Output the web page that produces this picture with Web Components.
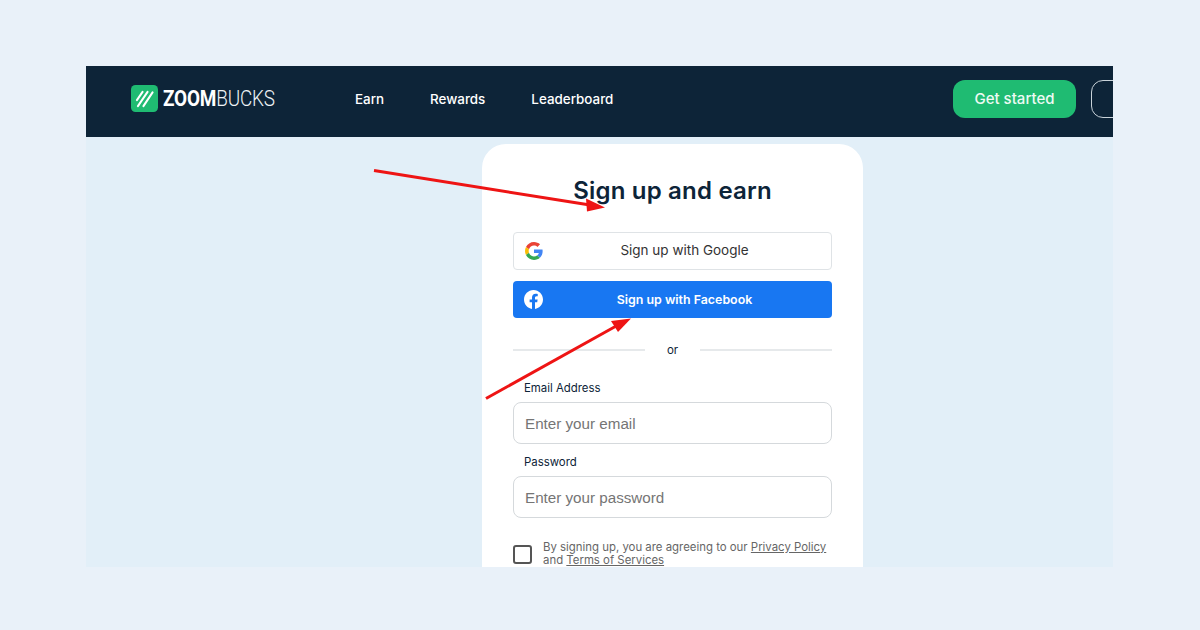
<!DOCTYPE html>
<html lang="en">
<head>
<meta charset="utf-8">
<title>Zoombucks sign up</title>
<style>
html, body { margin: 0; height: 100%; }
body { background: #e9f1f9; font-family: Inter, sans-serif; }
</style>
</head>
<body>
<zb-page>
  <zb-nav slot="nav"></zb-nav>
  <zb-signup slot="main"></zb-signup>
</zb-page>
<script>
'use strict';

class ZbPage extends HTMLElement {
  constructor() {
    super();
    const shadowRoot = this.attachShadow({mode: 'open'});
    shadowRoot.innerHTML = `
<style>
:host {
  display: block;
  box-sizing: border-box;
  width: 1200px;
  height: 630px;
  padding: 66px 87px 63px 86px;
}
.frame {
  position: relative;
  height: 100%;
  display: flex;
  flex-direction: column;
  overflow: hidden;
  background: #e2eff8;
}
.main {
  flex: 1;
  min-height: 0;
  display: flex;
  padding: 7px 0 0 396px;
}
/* the red arrows are drawn over the shot */
.arrows {
  position: absolute;
  left: 0;
  top: 0;
  width: 1027px;
  height: 501px;
  pointer-events: none;
}
</style>
<div class="frame">
  <slot name="nav"></slot>
  <div class="main"><slot name="main"></slot></div>
  <svg class="arrows" viewBox="86 66 1027 501">
    <path d="M374 170.500 L590 205" stroke="#ee1414" stroke-width="3" fill="none"/>
    <path d="M605 207.500 L586 198.500 L587 211.500 Z" fill="#ee1414"/>
    <path d="M486 398.500 L618 325" stroke="#ee1414" stroke-width="3" fill="none"/>
    <path d="M631 318.500 L611 321 L618 332 Z" fill="#ee1414"/>
  </svg>
</div>
`;
  }
}

class ZbNav extends HTMLElement {
  constructor() {
    super();
    const shadowRoot = this.attachShadow({mode: 'open'});
    shadowRoot.innerHTML = `
<style>
:host {
  box-sizing: border-box;
  display: flex;
  flex: none;
  align-items: center;
  height: 71px;
  padding: 0 0 6px 45px;
  background: #0d2438;
  color: #fff;
}
.logo {
  display: flex;
  align-items: center;
  gap: 5px;
  width: 224px;
  flex: none;
}
.logo svg { display: block; }
.word {
  font-family: Roboto, sans-serif;
  font-size: 22px;
  line-height: 26px;
  font-weight: 300;
  letter-spacing: -.2px;
  color: #eef3f6;
  transform: scaleX(.86);
  transform-origin: left center;
  white-space: nowrap;
}
.word b { font-weight: 700; color: #fff; }
.links {
  display: flex;
  gap: 46px;
  font-size: 13.4px;
  font-weight: 500;
  flex: 1;
}
.btn {
  box-sizing: border-box;
  flex: none;
  height: 38px;
  border-radius: 12px;
}
.start {
  display: flex;
  align-items: center;
  justify-content: center;
  width: 123px;
  background: #1fbb72;
  font-size: 15px;
  font-weight: 500;
  color: #eefaf4;
}
.login {
  width: 60px;
  margin: 0 -38px 0 15px;
  border: 1px solid #c9d3da;
}
</style>
<div class="logo">
  <svg width="27" height="27" viewBox="0 0 27 27">
    <rect width="27" height="27" rx="4.500" fill="#1fbb72"/>
    <path d="M6 15 L11.500 7 M7 21 L16.500 7 M12.500 21 L21.500 7.500" stroke="#fff" stroke-width="2.200" stroke-linecap="round" fill="none"/>
  </svg>
  <span class="word"><b>ZOOM</b>BUCKS</span>
</div>
<nav class="links"><span>Earn</span><span>Rewards</span><span>Leaderboard</span></nav>
<div class="btn start">Get started</div>
<div class="btn login"></div>
`;
  }
}

class ZbSignup extends HTMLElement {
  constructor() {
    super();
    const shadowRoot = this.attachShadow({mode: 'open'});
    shadowRoot.innerHTML = `
<style>
:host {
  display: block;
  box-sizing: border-box;
  width: 381px;
  height: 520px;
  padding: 0 31px;
  background: #fff;
  border-radius: 24px;
  color: #0d2438;
}
h1 {
  margin: 0;
  padding-top: 31px;
  height: 57px;
  font-size: 24px;
  line-height: 32px;
  font-weight: 600;
  letter-spacing: .2px;
  text-align: center;
}
.oauth {
  position: relative;
  box-sizing: border-box;
  display: flex;
  align-items: center;
  justify-content: center;
  padding-left: 24px;
  border-radius: 4px;
}
.oauth svg {
  position: absolute;
  left: 11px;
}
.google {
  height: 38px;
  border: 1px solid #dfe3e6;
  color: #333;
  font-size: 13.5px;
}
.google span { position: relative; top: -1px; }
.facebook {
  height: 37px;
  margin-top: 11px;
  background: #1877f2;
  color: #fff;
  font-size: 12.4px;
  font-weight: 600;
}
.or {
  display: flex;
  align-items: center;
  gap: 22px;
  margin-top: 23px;
  height: 18px;
  font-size: 11.5px;
}
.or i {
  flex: 1;
  height: 2px;
  background: #e6e9eb;
}
label {
  display: block;
  padding-left: 11px;
  font-size: 11.4px;
  line-height: 16px;
}
.email-label { margin-top: 21px; }
.pass-label { margin-top: 10px; }
.input {
  box-sizing: border-box;
  display: flex;
  align-items: center;
  height: 42px;
  margin-top: 6px;
  padding-left: 11px;
  border: 1px solid #d5d9dc;
  border-radius: 8px;
  font-family: "Liberation Sans", Arial, sans-serif;
  font-size: 15.2px;
  color: #757575;
}
.terms {
  display: flex;
  gap: 11px;
  margin-top: 23px;
  font-size: 11.4px;
  line-height: 13px;
  color: #666;
}
.box {
  box-sizing: border-box;
  flex: none;
  width: 19px;
  height: 19px;
  margin-top: 4px;
  border: 2px solid #555;
  border-radius: 3px;
}
u { text-underline-offset: 1px; }
</style>
<h1>Sign up and earn</h1>
<div class="oauth google">
  <svg width="18" height="18" viewBox="0 0 48 48">
    <path fill="#EA4335" d="M24 9.500c3.500 0 6.700 1.200 9.200 3.600l6.900-6.900C35.900 2.400 30.500 0 24 0 14.600 0 6.500 5.400 2.600 13.200l8 6.200C12.500 13.700 17.800 9.500 24 9.500z"/>
    <path fill="#4285F4" d="M47 24.500c0-1.600-.1-3.100-.4-4.500H24v9h12.900c-.6 3-2.300 5.500-4.800 7.200l7.700 6C44.300 37.900 47 31.800 47 24.500z"/>
    <path fill="#FBBC05" d="M10.600 28.600C10.100 27.200 9.800 25.600 9.800 24s.3-3.200.8-4.600l-8-6.200C.9 16.500 0 20.100 0 24s.9 7.500 2.600 10.800l8-6.200z"/>
    <path fill="#34A853" d="M24 48c6.500 0 11.900-2.100 15.800-5.800l-7.700-6c-2.100 1.400-4.900 2.300-8.100 2.300-6.200 0-11.500-4.200-13.400-9.900l-8 6.200C6.500 42.600 14.600 48 24 48z"/>
  </svg>
  <span>Sign up with Google</span>
</div>
<div class="oauth facebook">
  <svg width="19" height="19" viewBox="0 0 24 24">
    <path fill="#fff" d="M24 12.070C24 5.400 18.630 0 12 0S0 5.400 0 12.070c0 6.030 4.390 11.020 10.130 11.930v-8.440H7.080v-3.490h3.050V9.410c0-3.020 1.790-4.690 4.530-4.690 1.310 0 2.690.24 2.690.24v2.970h-1.510c-1.490 0-1.960.93-1.960 1.880v2.260h3.330l-.53 3.490h-2.800V24C19.610 23.090 24 18.100 24 12.070z"/>
  </svg>
  Sign up with Facebook
</div>
<div class="or"><i></i><span>or</span><i></i></div>
<label class="email-label">Email Address</label>
<div class="input">Enter your email</div>
<label class="pass-label">Password</label>
<div class="input">Enter your password</div>
<div class="terms">
  <div class="box"></div>
  <div>By signing up, you are agreeing to our <u>Privacy Policy</u> and <u>Terms of Services</u></div>
</div>
`;
  }
}

customElements.define('zb-page', ZbPage);
customElements.define('zb-nav', ZbNav);
customElements.define('zb-signup', ZbSignup);
</script>
</body>
</html>
